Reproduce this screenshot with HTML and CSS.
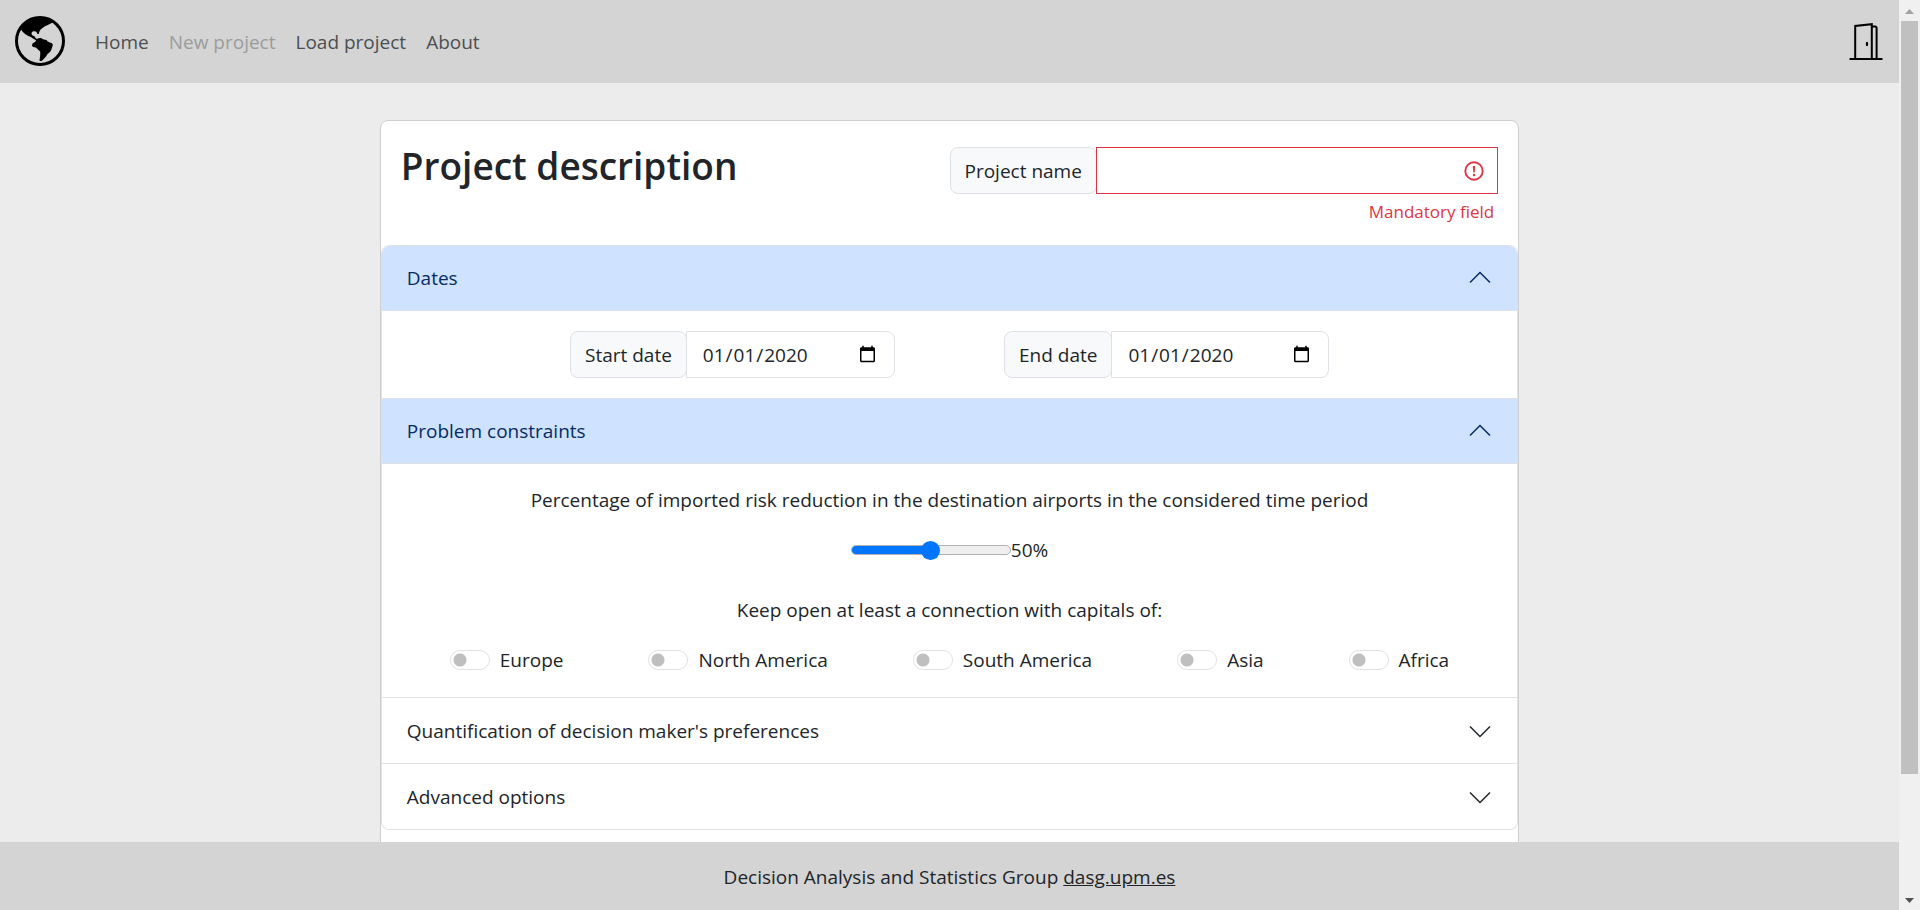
FILE: index.html
```html
<!DOCTYPE html>
<html lang="en">
<head>
<meta charset="utf-8">
<title>New project</title>
<link rel="stylesheet" href="styles.css">
</head>
<body>
<div class="app">
  <header class="navbar">
    <a class="brand" href="#" aria-label="Home page">
      <svg width="50" height="50" viewBox="0 0 50 50" aria-hidden="true">
        <circle cx="25" cy="25" r="23.5" fill="none" stroke="#000" stroke-width="3"/>
        <path d="M6 13.5C10 6 17 1.500 25 1.500C30 1.500 35 3 38.500 6.200C35 8 30.500 9.500 27.500 12C25 13.500 24.500 15 23.800 17.800C22.800 18.600 22 17.500 21.500 16C20.500 14.800 17.500 15 16.700 16.500C16 18.500 17.500 20 19.500 20.200C20 21.500 21 22.500 22.500 23.500L21.500 24.600C18.500 22.500 16 21 13.300 20C10.500 18.500 7.500 16.500 6 13.500Z"/>
        <path d="M17.500 27.500C19 26.500 20.500 26 21 24.500C22 22.500 24 21.700 26.500 22.300C28 23.500 29.500 23.700 31.500 24C32.500 26 35 26.500 37 27.300C38.500 28.500 37.500 30.500 36.700 32.500C36 35.500 34.500 36.500 32.500 38C31 41 28.500 43.500 26.500 45C25.500 45.300 24.300 45 24.500 44C25 41 25.500 38.500 25.200 35.700C24.500 34 22.500 33.800 21.500 32C20.500 31 17.500 31.500 17 29.500Z"/>
      </svg>
    </a>
    <nav class="links">
      <a href="#">Home</a>
      <a href="#" class="disabled" aria-disabled="true">New project</a>
      <a href="#">Load project</a>
      <a href="#">About</a>
    </nav>
    <a class="exit" href="#" aria-label="Exit">
      <svg width="34" height="38" viewBox="0 0 34 38" fill="none" stroke="#000" stroke-width="2" aria-hidden="true">
        <path d="M.5 37H33.500"/>
        <path d="M6.200 37V4L22.800 2.200V37M22.800 4.500H26Q27.600 4.500 27.600 6V37"/>
        <ellipse cx="18" cy="22" rx="1.200" ry="2.200" fill="#000" stroke="none"/>
      </svg>
    </a>
  </header>

  <main class="content">
    <form class="card">
      <div class="card-head">
        <h1>Project description</h1>
        <div class="name-field">
          <div class="group">
            <label class="addon" for="name">Project name</label>
            <div class="invalid">
              <input id="name" type="text" aria-describedby="name-error">
              <svg class="warn" width="20" height="20" viewBox="0 0 20 20" aria-hidden="true">
                <circle cx="10" cy="10" r="8.700" fill="none" stroke="#dc3545" stroke-width="1.900"/>
                <path d="M8.800 5H11.200L10.700 11.500H9.300Z" fill="#dc3545"/>
                <circle cx="10" cy="14" r="1.200" fill="#dc3545"/>
              </svg>
            </div>
          </div>
          <p class="error" id="name-error">Mandatory field</p>
        </div>
      </div>

      <div class="accordion">
        <section class="item">
          <button type="button" class="toggle open" aria-expanded="true">Dates
            <svg class="chevron" viewBox="0 0 24 24" aria-hidden="true"><path d="M2 7.500L12 17.500L22 7.500"/></svg>
          </button>
          <div class="panel dates">
            <div class="group date">
              <label class="addon" for="start">Start date</label>
              <input id="start" type="date" value="2020-01-01">
            </div>
            <div class="group date">
              <label class="addon" for="end">End date</label>
              <input id="end" type="date" value="2020-01-01">
            </div>
          </div>
        </section>
        <section class="item">
          <button type="button" class="toggle open" aria-expanded="true">Problem constraints
            <svg class="chevron" viewBox="0 0 24 24" aria-hidden="true"><path d="M2 7.500L12 17.500L22 7.500"/></svg>
          </button>
          <div class="panel constraints">
            <label for="risk">Percentage of imported risk reduction in the destination airports in the considered time period</label>
            <div class="slider">
              <input id="risk" type="range" min="0" max="100" value="50" style="--value: 50%">
              <output for="risk">50%</output>
            </div>
            <p class="capitals">Keep open at least a connection with capitals of:</p>
            <div class="switches">
              <label><input type="checkbox" role="switch">Europe</label>
              <label><input type="checkbox" role="switch">North America</label>
              <label><input type="checkbox" role="switch">South America</label>
              <label><input type="checkbox" role="switch">Asia</label>
              <label><input type="checkbox" role="switch">Africa</label>
            </div>
          </div>
        </section>
        <section class="item">
          <button type="button" class="toggle" aria-expanded="false">Quantification of decision maker's preferences
            <svg class="chevron" viewBox="0 0 24 24" aria-hidden="true"><path d="M2 7.500L12 17.500L22 7.500"/></svg>
          </button>
        </section>
        <section class="item">
          <button type="button" class="toggle" aria-expanded="false">Advanced options
            <svg class="chevron" viewBox="0 0 24 24" aria-hidden="true"><path d="M2 7.500L12 17.500L22 7.500"/></svg>
          </button>
        </section>
      </div>
    </form>
  </main>

  <footer class="footer">Decision Analysis and Statistics Group&nbsp;<a href="#">dasg.upm.es</a></footer>
</div>
<div class="scrollbar" aria-hidden="true">
  <svg width="9" height="5" viewBox="0 0 9 5"><path d="M4.500 0L9 5H0Z" fill="#a3a3a3"/></svg>
  <div class="track"><div class="thumb"></div></div>
  <svg width="9" height="5" viewBox="0 0 9 5"><path d="M0 0H9L4.500 5Z" fill="#505050"/></svg>
</div>
</body>
</html>
```
FILE: styles.css
```css
* {
  box-sizing: border-box;
}

body {
  margin: 0;
  height: 100vh;
  display: flex;
  overflow: hidden;
  background: #ececec;
  color: #212529;
  font: 19px/30px "Open Sans", "Noto Sans", sans-serif;
}

h1,
p {
  margin: 0;
}

input,
button {
  font: inherit;
  color: inherit;
}

.app {
  flex: 1;
  min-width: 0;
  display: flex;
  flex-direction: column;
}

.navbar {
  display: flex;
  align-items: center;
  padding: 16px 16px 17px 15px;
  background: #d4d4d4;
}

.brand,
.exit {
  display: flex;
}

.links {
  flex: 1;
  display: flex;
  gap: 20px;
  padding: 2px 0 0 30px;
}

.links a {
  color: #4d4f51;
  text-decoration: none;
}

.links .disabled {
  color: #9b9c9d;
}

.content {
  flex: 1;
  min-height: 0;
  overflow: hidden;
  padding-top: 37px;
}

.card {
  width: 60%;
  margin: 0 auto;
  padding-bottom: 80px;
  background: #fff;
  border: 1px solid #cfcfcf;
  border-radius: 8px;
}

.card-head {
  display: flex;
  justify-content: space-between;
  padding: 20px;
}

h1 {
  font-size: 37px;
  font-weight: 600;
  line-height: 50px;
}

.name-field {
  width: 50%;
  padding-top: 6px;
}

.group {
  display: flex;
  height: 47px;
}

.addon {
  display: flex;
  align-items: center;
  padding: 0 14px;
  background: #f8f9fa;
  border: 1px solid #dee2e6;
  border-radius: 8px;
  white-space: nowrap;
}

.invalid {
  flex: 1;
  display: flex;
  align-items: center;
  margin-left: -1px;
  padding-right: 13px;
  background: #fff;
  border: 1px solid #dc3545;
}

.invalid input {
  flex: 1;
  min-width: 0;
  padding: 0 15px;
  border: 0;
  outline: 0;
  background: none;
}

.error {
  padding: 5px 4px 0 0;
  font-size: 17px;
  line-height: 26px;
  text-align: right;
  color: #dc3545;
}

.item {
  border: 1px solid #dee2e6;
  border-top: 0;
}

.item:first-child {
  border-top: 1px solid #dee2e6;
  border-radius: 8px 8px 0 0;
}

.item:last-child {
  border-radius: 0 0 8px 8px;
}

.toggle {
  width: 100%;
  display: flex;
  align-items: center;
  justify-content: space-between;
  height: 65px;
  padding: 0 25px;
  border: 0;
  border-radius: inherit;
  background: #fff;
  text-align: left;
}

.toggle.open {
  background: #cfe2ff;
  color: #052c65;
  border-bottom: 1px solid #dee2e6;
}

.chevron {
  width: 24px;
  height: 24px;
  fill: none;
  stroke: currentColor;
  stroke-width: 1.5;
}

.open .chevron {
  transform: rotate(180deg);
}

.dates {
  display: flex;
  justify-content: center;
  gap: 109px;
  padding: 20px;
}

.date {
  width: 325px;
}

.date input {
  flex: 1;
  min-width: 0;
  margin-left: -1px;
  padding: 0 15px;
  background: #fff;
  border: 1px solid #dee2e6;
  border-radius: 0 8px 8px 0;
}

.constraints {
  display: flex;
  flex-direction: column;
  align-items: center;
  padding: 21px 0 22px;
}

.slider {
  display: flex;
  align-items: center;
  padding: 20px 0;
}

.slider input {
  appearance: none;
  width: 160px;
  height: 20px;
  margin: 0;
  background: none;
}

.slider input::-webkit-slider-runnable-track {
  height: 10px;
  border: 1px solid #b2b2b2;
  border-radius: 5px;
  background: linear-gradient(to right, #0075ff var(--value), transparent var(--value)) border-box, #efefef;
}

.slider input::-webkit-slider-thumb {
  appearance: none;
  width: 19px;
  height: 19px;
  margin-top: -5px;
  border-radius: 50%;
  background: #0075ff;
}

.capitals {
  padding: 10px 0 20px;
}

.switches {
  align-self: stretch;
  display: flex;
  justify-content: space-between;
  padding: 0 68px;
}

.switches label {
  display: flex;
  align-items: center;
  gap: 10px;
}

.switches input {
  appearance: none;
  width: 40px;
  height: 20px;
  margin: 0;
  border: 1px solid #dee2e6;
  border-radius: 10px;
  background: radial-gradient(circle at 9px 9px, #bfbfbf 6px, #fff 7px);
}

.footer {
  display: flex;
  justify-content: center;
  padding: 20px 0 18px;
  background: #d4d4d4;
}

.footer a {
  color: inherit;
}

.scrollbar {
  width: 21px;
  display: flex;
  flex-direction: column;
  align-items: center;
  gap: 7px;
  padding: 9px 0 7px;
  background: #f0f0f0;
}

.track {
  flex: 1;
  align-self: stretch;
  padding: 0 2px;
}

.thumb {
  height: 86.5%;
  background: #c0c0c0;
}
```
